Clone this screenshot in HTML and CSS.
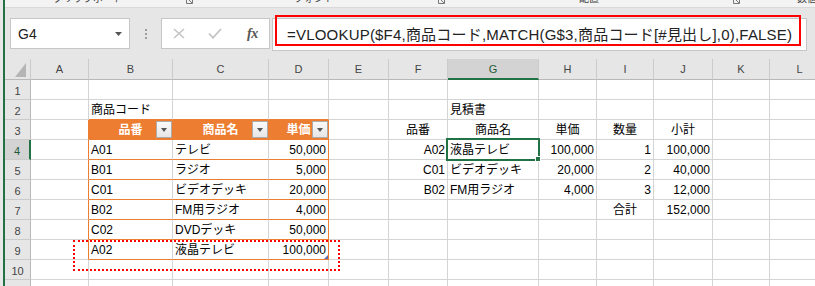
FILE: index.html
```html
<!DOCTYPE html>
<html lang="ja">
<head>
<meta charset="utf-8">
<title>Excel VLOOKUP</title>
<link rel="stylesheet" href="styles.css">
</head>
<body>
<div class="app">
  <div class="edge"></div>
  <div class="main">
    <div class="ribbon">
      <span class="rlabel l1">クリップボード</span>
      <svg class="launch k1" width="7" height="4" viewBox="0 0 7 4"><path d="M0.5 0V3.5H6.5V0M3 0L6 3" fill="none" stroke="#777" stroke-width="1"/></svg>
      <span class="rlabel l2">フォント</span>
      <svg class="launch k2" width="7" height="4" viewBox="0 0 7 4"><path d="M0.5 0V3.5H6.5V0M3 0L6 3" fill="none" stroke="#777" stroke-width="1"/></svg>
      <span class="rlabel l3">配置</span>
      <svg class="launch k3" width="7" height="4" viewBox="0 0 7 4"><path d="M0.5 0V3.5H6.5V0M3 0L6 3" fill="none" stroke="#777" stroke-width="1"/></svg>
      <span class="rlabel l4">数値</span>
    </div>

    <div class="fbar">
      <div class="namebox">
        <span class="nb-text">G4</span>
        <svg width="7" height="4" viewBox="0 0 7 4"><path d="M0 0H7L3.5 4Z" fill="#555"/></svg>
      </div>
      <div class="grip"><i></i><i></i><i></i></div>
      <div class="fxbox">
        <svg class="ic-x" width="12" height="11" viewBox="0 0 12 11"><path d="M1 1L11 10M11 1L1 10" stroke="#c4c4c4" stroke-width="1.6" fill="none"/></svg>
        <svg class="ic-ok" width="14" height="11" viewBox="0 0 14 11"><path d="M1 5.5L5 9.8L13 1" stroke="#c4c4c4" stroke-width="1.8" fill="none"/></svg>
        <span class="fx">fx</span>
      </div>
      <div class="formula">=VLOOKUP($F4,商品コード,MATCH(G$3,商品コード[#見出し],0),FALSE)</div>
      <div class="mark-formula"></div>
    </div>

    <div class="sheet">
      <!-- column headers -->
      <div class="ch corner"><svg width="26" height="20" viewBox="0 0 26 20"><path d="M10 18H21V4Z" fill="#b5b5b5"/></svg></div>
      <div class="ch">A</div><div class="ch">B</div><div class="ch">C</div><div class="ch">D</div><div class="ch">E</div><div class="ch">F</div><div class="ch sel">G</div><div class="ch">H</div><div class="ch">I</div><div class="ch">J</div><div class="ch">K</div><div class="ch">L</div>

      <!-- row 1 -->
      <div class="rh">1</div>
      <div class="c"></div><div class="c"></div><div class="c"></div><div class="c"></div><div class="c"></div><div class="c"></div><div class="c"></div><div class="c"></div><div class="c"></div><div class="c"></div><div class="c"></div><div class="c"></div>

      <!-- row 2 -->
      <div class="rh">2</div>
      <div class="c"></div>
      <div class="c ob">商品コード</div>
      <div class="c ob"></div>
      <div class="c ob"></div>
      <div class="c"></div>
      <div class="c"></div>
      <div class="c">見積書</div>
      <div class="c"></div><div class="c"></div><div class="c"></div><div class="c"></div><div class="c"></div>

      <!-- row 3 -->
      <div class="rh">3</div>
      <div class="c or"></div>
      <div class="c th">品番<span class="fbtn"></span></div>
      <div class="c th">商品名<span class="fbtn"></span></div>
      <div class="c th">単価<span class="fbtn"></span></div>
      <div class="c"></div>
      <div class="c m">品番</div>
      <div class="c m">商品名</div>
      <div class="c m">単価</div>
      <div class="c m">数量</div>
      <div class="c m">小計</div>
      <div class="c"></div><div class="c"></div>

      <!-- row 4 -->
      <div class="rh sel">4</div>
      <div class="c or"></div>
      <div class="c ob">A01</div>
      <div class="c ob">テレビ</div>
      <div class="c ob or r">50,000</div>
      <div class="c"></div>
      <div class="c r">A02</div>
      <div class="c">液晶テレビ<span class="selbox"><span class="handle"></span></span></div>
      <div class="c r">100,000</div>
      <div class="c r">1</div>
      <div class="c r">100,000</div>
      <div class="c"></div><div class="c"></div>

      <!-- row 5 -->
      <div class="rh">5</div>
      <div class="c or"></div>
      <div class="c ob">B01</div>
      <div class="c ob">ラジオ</div>
      <div class="c ob or r">5,000</div>
      <div class="c"></div>
      <div class="c r">C01</div>
      <div class="c">ビデオデッキ</div>
      <div class="c r">20,000</div>
      <div class="c r">2</div>
      <div class="c r">40,000</div>
      <div class="c"></div><div class="c"></div>

      <!-- row 6 -->
      <div class="rh">6</div>
      <div class="c or"></div>
      <div class="c ob">C01</div>
      <div class="c ob">ビデオデッキ</div>
      <div class="c ob or r">20,000</div>
      <div class="c"></div>
      <div class="c r">B02</div>
      <div class="c">FM用ラジオ</div>
      <div class="c r">4,000</div>
      <div class="c r">3</div>
      <div class="c r">12,000</div>
      <div class="c"></div><div class="c"></div>

      <!-- row 7 -->
      <div class="rh">7</div>
      <div class="c or"></div>
      <div class="c ob">B02</div>
      <div class="c ob">FM用ラジオ</div>
      <div class="c ob or r">4,000</div>
      <div class="c"></div>
      <div class="c"></div>
      <div class="c"></div>
      <div class="c"></div>
      <div class="c m">合計</div>
      <div class="c r">152,000</div>
      <div class="c"></div><div class="c"></div>

      <!-- row 8 -->
      <div class="rh">8</div>
      <div class="c or"></div>
      <div class="c ob">C02</div>
      <div class="c ob">DVDデッキ</div>
      <div class="c ob or r">50,000</div>
      <div class="c"></div><div class="c"></div><div class="c"></div><div class="c"></div><div class="c"></div><div class="c"></div><div class="c"></div><div class="c"></div>

      <!-- row 9 -->
      <div class="rh">9</div>
      <div class="c or"></div>
      <div class="c ob">A02</div>
      <div class="c ob">液晶テレビ</div>
      <div class="c ob or r">100,000<span class="tresize"></span></div>
      <div class="c"></div><div class="c"></div><div class="c"></div><div class="c"></div><div class="c"></div><div class="c"></div><div class="c"></div><div class="c"></div>

      <!-- row 10 -->
      <div class="rh">10</div>
      <div class="c"></div><div class="c"></div><div class="c"></div><div class="c"></div><div class="c"></div><div class="c"></div><div class="c"></div><div class="c"></div><div class="c"></div><div class="c"></div><div class="c"></div><div class="c"></div>

      <!-- row 11 -->
      <div class="rh">11</div>
      <div class="c"></div><div class="c"></div><div class="c"></div><div class="c"></div><div class="c"></div><div class="c"></div><div class="c"></div><div class="c"></div><div class="c"></div><div class="c"></div><div class="c"></div><div class="c"></div>

      <div class="mark-dotted"></div>
    </div>
  </div>
</div>
</body>
</html>
```

FILE: styles.css
```css
* { box-sizing: border-box; }
html, body { margin: 0; padding: 0; }
body {
  width: 815px;
  height: 286px;
  overflow: hidden;
  background: #fff;
  font-family: "Liberation Sans", "Noto Sans CJK JP", sans-serif;
  color: #000;
}
.app { display: flex; height: 286px; }
.edge {
  width: 5px;
  flex: none;
  background: #e8e8e8;
  border-right: 2px solid #217346;
}
.main {
  flex: 1;
  min-width: 0;
  display: flex;
  flex-direction: column;
  overflow: hidden;
}

/* ribbon bottom strip */
.ribbon {
  height: 8px;
  flex: none;
  background: #f3f3f3;
  border-bottom: 1px solid #d9d9d9;
  display: flex;
  align-items: flex-start;
  overflow: hidden;
  font-family: "Noto Sans CJK JP", sans-serif;
  font-size: 10px;
  line-height: 12px;
  color: #444;
}
.rlabel { margin-top: -8px; white-space: nowrap; flex: none; }
.launch { flex: none; display: block; }
.l1 { margin-left: 48px; }
.k1 { margin-left: 63px; }
.l2 { margin-left: 101px; }
.k2 { margin-left: 104px; }
.l3 { margin-left: 134px; }
.k3 { margin-left: 134px; }
.l4 { margin-left: 57px; }

/* formula bar */
.fbar {
  height: 51px;
  flex: none;
  background: #e6e6e6;
  position: relative;
  display: flex;
  align-items: flex-start;
  padding: 10px 0 0 5px;
}
.namebox {
  flex: none;
  width: 120px;
  height: 31px;
  background: #fff;
  border: 1px solid #c6c6c6;
  display: flex;
  align-items: center;
  justify-content: space-between;
  padding: 0 7px;
  font-size: 14px;
  color: #222;
}
.grip {
  flex: none;
  width: 31px;
  height: 31px;
  display: flex;
  flex-direction: column;
  align-items: center;
  justify-content: center;
  gap: 2px;
}
.grip i { display: block; width: 2px; height: 2px; background: #9d9d9d; }
.fxbox {
  flex: none;
  width: 109px;
  height: 31px;
  background: #fff;
  border: 1px solid #c6c6c6;
  display: flex;
  align-items: center;
  padding-left: 11px;
}
.ic-x, .ic-ok { display: block; flex: none; }
.ic-ok { margin-left: 23px; }
.fx {
  margin-left: 25px;
  font-family: "Liberation Serif", serif;
  font-style: italic;
  font-weight: bold;
  font-size: 14px;
  color: #555;
  letter-spacing: -0.5px;
}
.formula {
  flex: none;
  margin-left: 2px;
  width: 535px;
  height: 33px;
  background: #fff;
  border: 1px solid #c6c6c6;
  padding-left: 14px;
  font-size: 15px;
  line-height: 31px;
  letter-spacing: 0.2px;
  white-space: nowrap;
  color: #222;
}
.mark-formula {
  position: absolute;
  left: 270px;
  top: 7px;
  width: 526px;
  height: 31px;
  border: 2px solid #ff0000;
}

/* sheet grid */
.sheet {
  flex: none;
  position: relative;
  display: grid;
  grid-template-columns: 26px 58px 84px 96px 60px 60px 59px 91px 58px 57px 59px 57px 60px;
  grid-template-rows: 21px repeat(11, 20px);
  width: 825px;
}
.ch {
  background: #e6e6e6;
  border-right: 1px solid #cbcbcb;
  border-bottom: 1px solid #b9b9b9;
  font-size: 11px;
  line-height: 20px;
  text-align: center;
  color: #444;
}
.ch.corner { padding: 0; }
.ch.corner svg { display: block; }
.ch.sel {
  background: #d3d3d3;
  border-bottom: 2px solid #217346;
  color: #1f5a38;
}
.rh {
  background: #e6e6e6;
  border-right: 1px solid #b9b9b9;
  border-bottom: 1px solid #cbcbcb;
  font-size: 11px;
  line-height: 22px;
  text-align: center;
  color: #444;
}
.rh.sel {
  background: #d3d3d3;
  border-right: 2px solid #217346;
  color: #1f5a38;
}
.c {
  position: relative;
  border-right: 1px solid #d4d4d4;
  border-bottom: 1px solid #d4d4d4;
  font-size: 12px;
  line-height: 21px;
  padding: 0 2px;
  white-space: nowrap;
}
.r { text-align: right; }
.m { text-align: center; }
.ob { border-bottom-color: #ed7d31; }
.or { border-right-color: #ed7d31; }
.th {
  background: #ed7d31;
  border-color: #ed7d31;
  color: #fff;
  font-weight: bold;
  text-align: center;
}
.fbtn {
  position: absolute;
  right: 0;
  top: 1px;
  width: 16px;
  height: 17px;
  border: 1px solid #ababab;
  background: linear-gradient(#fafafa, #e6e6e6);
}
.fbtn::after {
  content: "";
  position: absolute;
  left: 4px;
  top: 6px;
  border-left: 3.5px solid transparent;
  border-right: 3.5px solid transparent;
  border-top: 4px solid #555;
}
.selbox {
  position: absolute;
  inset: -2px;
  border: 2px solid #217346;
  z-index: 2;
}
.handle {
  position: absolute;
  right: -3px;
  bottom: -3px;
  width: 6px;
  height: 6px;
  background: #217346;
  border: 1px solid #fff;
}
.tresize {
  position: absolute;
  right: 0;
  bottom: 0;
  width: 0;
  height: 0;
  border-left: 4px solid transparent;
  border-bottom: 4px solid #5a6fb8;
}
.mark-dotted {
  position: absolute;
  left: 68px;
  top: 181px;
  width: 267px;
  height: 31px;
  border: 2px dotted #ff0000;
  z-index: 3;
}
```
